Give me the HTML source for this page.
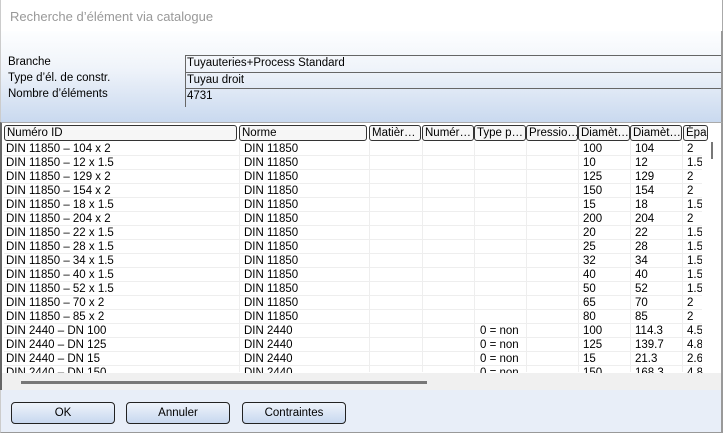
<!DOCTYPE html>
<html><head><meta charset="utf-8"><style>
*{margin:0;padding:0;box-sizing:border-box}
body{width:723px;height:433px;overflow:hidden;font-family:"Liberation Sans",sans-serif;font-size:11.5px;color:#000;background:#fff;position:relative}
.title{position:absolute;left:0;top:0;width:723px;height:31px;background:#fff;color:#999;font-size:13px;padding:9px 0 0 9px;border-left:1px solid #ccc;border-right:1px solid #aaa}
.top{position:absolute;left:0;top:31px;width:723px;height:91px;background:linear-gradient(#fdfeff 0%,#f0f4fa 40%,#c9d9ef 100%);border-right:2px solid #999;border-left:1px solid #ccc}
.lbl{position:absolute;left:7px}
.fld{position:absolute;left:184px;right:0;height:17px;border-top:1px solid #666;border-left:1px solid #666;padding:1px 0 0 1px}
.tbl{position:absolute;left:0;top:122px;width:723px;height:268px;background:#fff;border-left:2px solid #666;border-top:1px solid #aaa;border-right:2px solid #999;overflow:hidden}
.hdr{position:absolute;top:2px;height:16px;border:1px solid #333;border-radius:3px;background:#f6f6f6;padding:1px 0 0 2px;white-space:nowrap;overflow:hidden}
.row{position:absolute;left:2px;width:700px;height:14px;border-bottom:1px solid #eee}
.c{position:absolute;top:1px;white-space:nowrap;overflow:hidden}
.vl{position:absolute;top:18px;bottom:18px;width:1px;background:#eee}
.hs{position:absolute;left:0;right:0;top:250px;height:18px;background:#f0f0f0}
.vs{position:absolute;right:0;top:18px;width:19px;bottom:18px;background:#fff}
.bot{position:absolute;left:0;top:390px;width:723px;height:43px;background:#e8eef8;border-left:1px solid #ccc;border-right:2px solid #999;border-bottom:1px solid #999}
.btn{position:absolute;top:12px;width:104px;height:22px;border:1px solid #222;border-radius:4px;background:linear-gradient(#eef3fb,#c8d8ef);text-align:center;padding-top:4px;font-size:11.5px}
</style></head><body>
<div class="title">Recherche d’élément via catalogue</div>
<div class="top">
<div class="lbl" style="top:25px">Branche</div>
<div class="lbl" style="top:41px">Type d’él. de constr.</div>
<div class="lbl" style="top:57px">Nombre d’éléments</div>
<div class="fld" style="top:24px">Tuyauteries+Process Standard</div>
<div class="fld" style="top:41px">Tuyau droit</div>
<div class="fld" style="top:57px;height:19px">4731</div>
</div>
<div class="tbl">
<div class="hdr" style="left:2px;width:233px">Numéro ID</div>
<div class="hdr" style="left:237px;width:128px">Norme</div>
<div class="hdr" style="left:367px;width:52px">Matièr…</div>
<div class="hdr" style="left:420px;width:52px">Numér…</div>
<div class="hdr" style="left:472px;width:52px">Type p…</div>
<div class="hdr" style="left:524px;width:52px">Pressio…</div>
<div class="hdr" style="left:576px;width:52px">Diamèt…</div>
<div class="hdr" style="left:628px;width:52px">Diamèt…</div>
<div class="hdr" style="left:681px;width:25px">Épai</div>
<div class="vl" style="left:237px"></div><div class="vl" style="left:367px"></div><div class="vl" style="left:420px"></div><div class="vl" style="left:472px"></div><div class="vl" style="left:524px"></div><div class="vl" style="left:576px"></div><div class="vl" style="left:628px"></div><div class="vl" style="left:680px"></div>
<div id="rows"></div>
<div class="vs"><div style="position:absolute;left:9px;top:1px;width:2px;height:17px;background:#777"></div></div>
<div class="hs"><div style="position:absolute;left:19px;top:8px;width:406px;height:3px;background:#777"></div></div>
</div>
<div class="bot">
<div class="btn" style="left:10px">OK</div>
<div class="btn" style="left:125px">Annuler</div>
<div class="btn" style="left:241px">Contraintes</div>
</div>
<script>
var d=[["DIN 11850 – 104 x 2","DIN 11850","","100","104","2"],["DIN 11850 – 12 x 1.5","DIN 11850","","10","12","1.5"],["DIN 11850 – 129 x 2","DIN 11850","","125","129","2"],["DIN 11850 – 154 x 2","DIN 11850","","150","154","2"],["DIN 11850 – 18 x 1.5","DIN 11850","","15","18","1.5"],["DIN 11850 – 204 x 2","DIN 11850","","200","204","2"],["DIN 11850 – 22 x 1.5","DIN 11850","","20","22","1.5"],["DIN 11850 – 28 x 1.5","DIN 11850","","25","28","1.5"],["DIN 11850 – 34 x 1.5","DIN 11850","","32","34","1.5"],["DIN 11850 – 40 x 1.5","DIN 11850","","40","40","1.5"],["DIN 11850 – 52 x 1.5","DIN 11850","","50","52","1.5"],["DIN 11850 – 70 x 2","DIN 11850","","65","70","2"],["DIN 11850 – 85 x 2","DIN 11850","","80","85","2"],["DIN 2440 – DN 100","DIN 2440","0 = non","100","114.3","4.5"],["DIN 2440 – DN 125","DIN 2440","0 = non","125","139.7","4.8"],["DIN 2440 – DN 15","DIN 2440","0 = non","15","21.3","2.6"],["DIN 2440 – DN 150","DIN 2440","0 = non","150","168.3","4.8"]];
var h="";d.forEach(function(r,i){h+='<div class="row" style="top:'+(19+i*14)+'px"><span class="c" style="left:2px">'+r[0]+'</span><span class="c" style="left:240px">'+r[1]+'</span><span class="c" style="left:476px">'+r[2]+'</span><span class="c" style="left:579px">'+r[3]+'</span><span class="c" style="left:631px">'+r[4]+'</span><span class="c" style="left:683px">'+r[5]+'</span></div>'});
document.getElementById("rows").innerHTML=h;
</script>
</body></html>
